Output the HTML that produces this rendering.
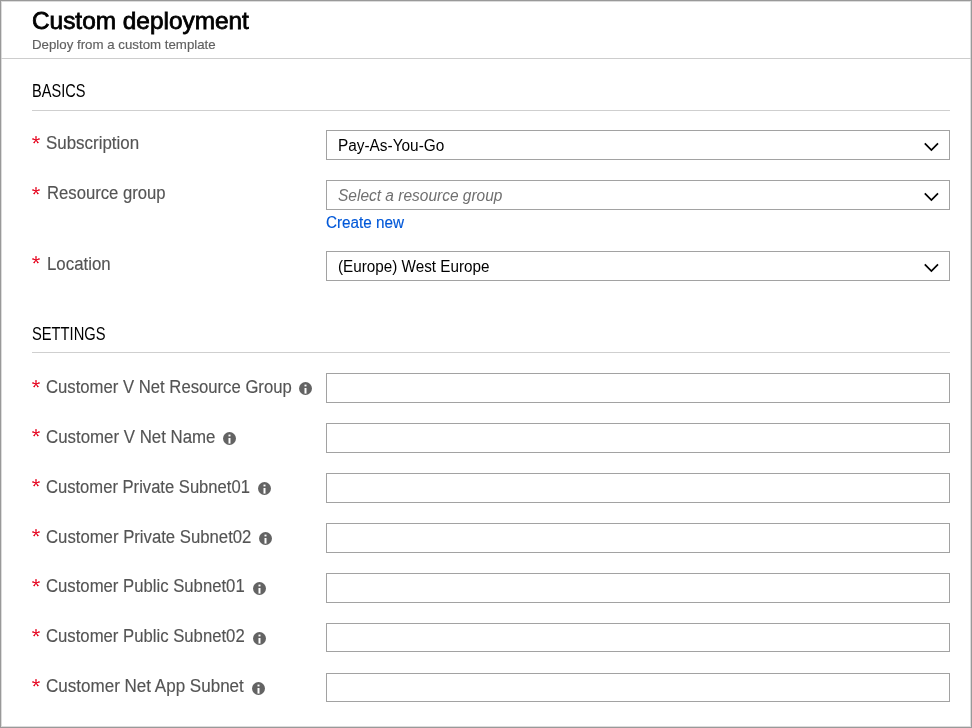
<!DOCTYPE html>
<html><head><meta charset="utf-8">
<style>
html,body{margin:0;padding:0;}
body{width:972px;height:728px;overflow:hidden;background:#fff;font-family:"Liberation Sans",sans-serif;position:relative;}
.frame{position:absolute;left:0;top:0;width:972px;height:728px;box-sizing:border-box;border:1px solid #999;box-shadow:inset 0 0 0 1px #dcdcdc;}
.t{position:absolute;white-space:nowrap;line-height:1;transform-origin:0 0;}
.wrap{position:absolute;left:0;top:0;width:972px;height:728px;filter:blur(0.3px);}
.bl{display:inline-block;width:0;height:0;}
.hsep{position:absolute;left:1px;width:970px;top:58px;height:1px;background:#cdcdcd;}
.sline{position:absolute;left:32px;width:918px;height:1px;background:#cfcfcf;}
.box{position:absolute;left:326px;width:624px;height:30px;box-sizing:border-box;border:1px solid #a2a2a2;background:#fff;}
.chev{position:absolute;left:922px;width:18px;height:10px;}
.ast{position:absolute;width:12px;height:12px;}
.info{position:absolute;width:13px;height:13px;}
</style></head><body>
<div class="wrap"><div class="frame"></div>
<div class="hsep"></div>
<div class="sline" style="top:110px"></div>
<div class="sline" style="top:352px"></div>
<div class="box" style="top:130px;height:30px"></div>
<div class="box" style="top:180px;height:30px"></div>
<div class="box" style="top:251px;height:30px"></div>
<div class="box" style="top:373px;height:30px"></div>
<div class="box" style="top:423px;height:30px"></div>
<div class="box" style="top:473px;height:30px"></div>
<div class="box" style="top:523px;height:30px"></div>
<div class="box" style="top:573px;height:30px"></div>
<div class="box" style="top:623px;height:29px"></div>
<div class="box" style="top:673px;height:29px"></div>
<svg class="chev" style="top:142px" viewBox="0 0 18 10"><path d="M2.8 1.3 L9.4 8.1 L16 1.3" fill="none" stroke="#000" stroke-width="1.7"/></svg>
<svg class="chev" style="top:192px" viewBox="0 0 18 10"><path d="M2.8 1.3 L9.4 8.1 L16 1.3" fill="none" stroke="#000" stroke-width="1.7"/></svg>
<svg class="chev" style="top:263px" viewBox="0 0 18 10"><path d="M2.8 1.3 L9.4 8.1 L16 1.3" fill="none" stroke="#000" stroke-width="1.7"/></svg>
<svg class="ast" style="left:30.15px;top:133.65px" viewBox="0 0 12 12"><path d="M6 6 L6.00 2.85 M6 6 L9.00 5.03 M6 6 L7.85 8.55 M6 6 L4.15 8.55 M6 6 L3.00 5.03" fill="none" stroke="#e5001c" stroke-width="1.15" stroke-linecap="round"/><circle cx="6.00" cy="2.85" r="0.72" fill="#e5001c"/><circle cx="9.00" cy="5.03" r="0.72" fill="#e5001c"/><circle cx="7.85" cy="8.55" r="0.72" fill="#e5001c"/><circle cx="4.15" cy="8.55" r="0.72" fill="#e5001c"/><circle cx="3.00" cy="5.03" r="0.72" fill="#e5001c"/></svg>
<svg class="ast" style="left:30.15px;top:184.7px" viewBox="0 0 12 12"><path d="M6 6 L6.00 2.85 M6 6 L9.00 5.03 M6 6 L7.85 8.55 M6 6 L4.15 8.55 M6 6 L3.00 5.03" fill="none" stroke="#e5001c" stroke-width="1.15" stroke-linecap="round"/><circle cx="6.00" cy="2.85" r="0.72" fill="#e5001c"/><circle cx="9.00" cy="5.03" r="0.72" fill="#e5001c"/><circle cx="7.85" cy="8.55" r="0.72" fill="#e5001c"/><circle cx="4.15" cy="8.55" r="0.72" fill="#e5001c"/><circle cx="3.00" cy="5.03" r="0.72" fill="#e5001c"/></svg>
<svg class="ast" style="left:30.15px;top:254.1px" viewBox="0 0 12 12"><path d="M6 6 L6.00 2.85 M6 6 L9.00 5.03 M6 6 L7.85 8.55 M6 6 L4.15 8.55 M6 6 L3.00 5.03" fill="none" stroke="#e5001c" stroke-width="1.15" stroke-linecap="round"/><circle cx="6.00" cy="2.85" r="0.72" fill="#e5001c"/><circle cx="9.00" cy="5.03" r="0.72" fill="#e5001c"/><circle cx="7.85" cy="8.55" r="0.72" fill="#e5001c"/><circle cx="4.15" cy="8.55" r="0.72" fill="#e5001c"/><circle cx="3.00" cy="5.03" r="0.72" fill="#e5001c"/></svg>
<svg class="ast" style="left:30.15px;top:377.6px" viewBox="0 0 12 12"><path d="M6 6 L6.00 2.85 M6 6 L9.00 5.03 M6 6 L7.85 8.55 M6 6 L4.15 8.55 M6 6 L3.00 5.03" fill="none" stroke="#e5001c" stroke-width="1.15" stroke-linecap="round"/><circle cx="6.00" cy="2.85" r="0.72" fill="#e5001c"/><circle cx="9.00" cy="5.03" r="0.72" fill="#e5001c"/><circle cx="7.85" cy="8.55" r="0.72" fill="#e5001c"/><circle cx="4.15" cy="8.55" r="0.72" fill="#e5001c"/><circle cx="3.00" cy="5.03" r="0.72" fill="#e5001c"/></svg>
<svg class="ast" style="left:30.15px;top:427.43px" viewBox="0 0 12 12"><path d="M6 6 L6.00 2.85 M6 6 L9.00 5.03 M6 6 L7.85 8.55 M6 6 L4.15 8.55 M6 6 L3.00 5.03" fill="none" stroke="#e5001c" stroke-width="1.15" stroke-linecap="round"/><circle cx="6.00" cy="2.85" r="0.72" fill="#e5001c"/><circle cx="9.00" cy="5.03" r="0.72" fill="#e5001c"/><circle cx="7.85" cy="8.55" r="0.72" fill="#e5001c"/><circle cx="4.15" cy="8.55" r="0.72" fill="#e5001c"/><circle cx="3.00" cy="5.03" r="0.72" fill="#e5001c"/></svg>
<svg class="ast" style="left:30.15px;top:477.26px" viewBox="0 0 12 12"><path d="M6 6 L6.00 2.85 M6 6 L9.00 5.03 M6 6 L7.85 8.55 M6 6 L4.15 8.55 M6 6 L3.00 5.03" fill="none" stroke="#e5001c" stroke-width="1.15" stroke-linecap="round"/><circle cx="6.00" cy="2.85" r="0.72" fill="#e5001c"/><circle cx="9.00" cy="5.03" r="0.72" fill="#e5001c"/><circle cx="7.85" cy="8.55" r="0.72" fill="#e5001c"/><circle cx="4.15" cy="8.55" r="0.72" fill="#e5001c"/><circle cx="3.00" cy="5.03" r="0.72" fill="#e5001c"/></svg>
<svg class="ast" style="left:30.15px;top:527.09px" viewBox="0 0 12 12"><path d="M6 6 L6.00 2.85 M6 6 L9.00 5.03 M6 6 L7.85 8.55 M6 6 L4.15 8.55 M6 6 L3.00 5.03" fill="none" stroke="#e5001c" stroke-width="1.15" stroke-linecap="round"/><circle cx="6.00" cy="2.85" r="0.72" fill="#e5001c"/><circle cx="9.00" cy="5.03" r="0.72" fill="#e5001c"/><circle cx="7.85" cy="8.55" r="0.72" fill="#e5001c"/><circle cx="4.15" cy="8.55" r="0.72" fill="#e5001c"/><circle cx="3.00" cy="5.03" r="0.72" fill="#e5001c"/></svg>
<svg class="ast" style="left:30.15px;top:576.92px" viewBox="0 0 12 12"><path d="M6 6 L6.00 2.85 M6 6 L9.00 5.03 M6 6 L7.85 8.55 M6 6 L4.15 8.55 M6 6 L3.00 5.03" fill="none" stroke="#e5001c" stroke-width="1.15" stroke-linecap="round"/><circle cx="6.00" cy="2.85" r="0.72" fill="#e5001c"/><circle cx="9.00" cy="5.03" r="0.72" fill="#e5001c"/><circle cx="7.85" cy="8.55" r="0.72" fill="#e5001c"/><circle cx="4.15" cy="8.55" r="0.72" fill="#e5001c"/><circle cx="3.00" cy="5.03" r="0.72" fill="#e5001c"/></svg>
<svg class="ast" style="left:30.15px;top:626.75px" viewBox="0 0 12 12"><path d="M6 6 L6.00 2.85 M6 6 L9.00 5.03 M6 6 L7.85 8.55 M6 6 L4.15 8.55 M6 6 L3.00 5.03" fill="none" stroke="#e5001c" stroke-width="1.15" stroke-linecap="round"/><circle cx="6.00" cy="2.85" r="0.72" fill="#e5001c"/><circle cx="9.00" cy="5.03" r="0.72" fill="#e5001c"/><circle cx="7.85" cy="8.55" r="0.72" fill="#e5001c"/><circle cx="4.15" cy="8.55" r="0.72" fill="#e5001c"/><circle cx="3.00" cy="5.03" r="0.72" fill="#e5001c"/></svg>
<svg class="ast" style="left:30.15px;top:676.58px" viewBox="0 0 12 12"><path d="M6 6 L6.00 2.85 M6 6 L9.00 5.03 M6 6 L7.85 8.55 M6 6 L4.15 8.55 M6 6 L3.00 5.03" fill="none" stroke="#e5001c" stroke-width="1.15" stroke-linecap="round"/><circle cx="6.00" cy="2.85" r="0.72" fill="#e5001c"/><circle cx="9.00" cy="5.03" r="0.72" fill="#e5001c"/><circle cx="7.85" cy="8.55" r="0.72" fill="#e5001c"/><circle cx="4.15" cy="8.55" r="0.72" fill="#e5001c"/><circle cx="3.00" cy="5.03" r="0.72" fill="#e5001c"/></svg>
<svg class="info" style="left:299px;top:382px" viewBox="0 0 13 13"><circle cx="6.5" cy="6.5" r="6.5" fill="#636363"/><rect x="5.5" y="2.6" width="2" height="1.8" fill="#fff"/><rect x="5.5" y="6" width="2" height="5.6" fill="#fff"/></svg>
<svg class="info" style="left:223px;top:432px" viewBox="0 0 13 13"><circle cx="6.5" cy="6.5" r="6.5" fill="#636363"/><rect x="5.5" y="2.6" width="2" height="1.8" fill="#fff"/><rect x="5.5" y="6" width="2" height="5.6" fill="#fff"/></svg>
<svg class="info" style="left:258px;top:482px" viewBox="0 0 13 13"><circle cx="6.5" cy="6.5" r="6.5" fill="#636363"/><rect x="5.5" y="2.6" width="2" height="1.8" fill="#fff"/><rect x="5.5" y="6" width="2" height="5.6" fill="#fff"/></svg>
<svg class="info" style="left:258.5px;top:532px" viewBox="0 0 13 13"><circle cx="6.5" cy="6.5" r="6.5" fill="#636363"/><rect x="5.5" y="2.6" width="2" height="1.8" fill="#fff"/><rect x="5.5" y="6" width="2" height="5.6" fill="#fff"/></svg>
<svg class="info" style="left:253px;top:582px" viewBox="0 0 13 13"><circle cx="6.5" cy="6.5" r="6.5" fill="#636363"/><rect x="5.5" y="2.6" width="2" height="1.8" fill="#fff"/><rect x="5.5" y="6" width="2" height="5.6" fill="#fff"/></svg>
<svg class="info" style="left:253px;top:632px" viewBox="0 0 13 13"><circle cx="6.5" cy="6.5" r="6.5" fill="#636363"/><rect x="5.5" y="2.6" width="2" height="1.8" fill="#fff"/><rect x="5.5" y="6" width="2" height="5.6" fill="#fff"/></svg>
<svg class="info" style="left:251.5px;top:681.6px" viewBox="0 0 13 13"><circle cx="6.5" cy="6.5" r="6.5" fill="#636363"/><rect x="5.5" y="2.6" width="2" height="1.8" fill="#fff"/><rect x="5.5" y="6" width="2" height="5.6" fill="#fff"/></svg>
<div class="t" id="title" style="left:32.2px;top:9px;font-size:24px;color:#000;transform:scaleX(1.016);-webkit-text-stroke:0.8px #000;">Custom deployment<span class="bl"></span></div>
<div class="t" id="sub" style="left:31.8px;top:38px;font-size:13px;color:#606060;transform:scaleX(1.021);-webkit-text-stroke:0.15px #606060;">Deploy from a custom template<span class="bl"></span></div>
<div class="t" id="basics" style="left:32px;top:82px;font-size:18px;color:#000;transform:scaleX(0.81);">BASICS<span class="bl"></span></div>
<div class="t" id="settings" style="left:31.8px;top:325px;font-size:18px;color:#000;transform:scaleX(0.817);">SETTINGS<span class="bl"></span></div>
<div class="t" id="l_sub" style="left:46.0px;top:134px;font-size:18px;color:#545454;transform:scaleX(0.94);-webkit-text-stroke:0.15px #545454;">Subscription<span class="bl"></span></div>
<div class="t" id="l_rg" style="left:47px;top:184px;font-size:18px;color:#545454;transform:scaleX(0.926);-webkit-text-stroke:0.15px #545454;">Resource group<span class="bl"></span></div>
<div class="t" id="l_loc" style="left:47px;top:255px;font-size:18px;color:#545454;transform:scaleX(0.935);-webkit-text-stroke:0.15px #545454;">Location<span class="bl"></span></div>
<div class="t" id="l1" style="left:46.4px;top:378px;font-size:18px;color:#545454;transform:scaleX(0.927);-webkit-text-stroke:0.15px #545454;">Customer V Net Resource Group<span class="bl"></span></div>
<div class="t" id="l2" style="left:46.4px;top:428px;font-size:18px;color:#545454;transform:scaleX(0.936);-webkit-text-stroke:0.15px #545454;">Customer V Net Name<span class="bl"></span></div>
<div class="t" id="l3" style="left:46.2px;top:478px;font-size:18px;color:#545454;transform:scaleX(0.922);-webkit-text-stroke:0.15px #545454;">Customer Private Subnet01<span class="bl"></span></div>
<div class="t" id="l4" style="left:46.2px;top:528px;font-size:18px;color:#545454;transform:scaleX(0.929);-webkit-text-stroke:0.15px #545454;">Customer Private Subnet02<span class="bl"></span></div>
<div class="t" id="l5" style="left:46.2px;top:577px;font-size:18px;color:#545454;transform:scaleX(0.928);-webkit-text-stroke:0.15px #545454;">Customer Public Subnet01<span class="bl"></span></div>
<div class="t" id="l6" style="left:46.2px;top:627px;font-size:18px;color:#545454;transform:scaleX(0.928);-webkit-text-stroke:0.15px #545454;">Customer Public Subnet02<span class="bl"></span></div>
<div class="t" id="l7" style="left:46.4px;top:677px;font-size:18px;color:#545454;transform:scaleX(0.946);-webkit-text-stroke:0.15px #545454;">Customer Net App Subnet<span class="bl"></span></div>
<div class="t" id="pay" style="left:337.6px;top:138px;font-size:16px;color:#000;transform:scaleX(0.961);">Pay-As-You-Go<span class="bl"></span></div>
<div class="t" id="select" style="left:338.2px;top:188px;font-size:16px;color:#707070;transform:scaleX(0.968);font-style:italic;">Select a resource group<span class="bl"></span></div>
<div class="t" id="europe" style="left:337.8px;top:259px;font-size:16px;color:#000;transform:scaleX(0.953);">(Europe) West Europe<span class="bl"></span></div>
<div class="t" id="create" style="left:326px;top:215px;font-size:16px;color:#0058d8;transform:scaleX(0.955);-webkit-text-stroke:0.15px #0058d8;">Create new<span class="bl"></span></div>
</div></body></html>
